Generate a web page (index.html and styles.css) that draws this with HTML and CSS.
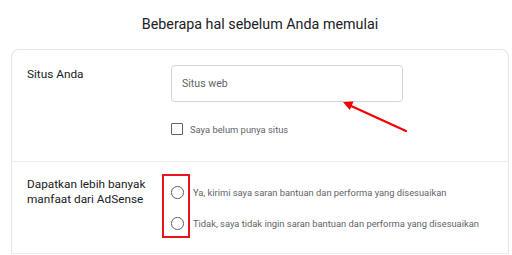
FILE: index.html
```html
<!DOCTYPE html>
<html lang="id">
<head>
<meta charset="utf-8">
<link rel="stylesheet" href="styles.css">
</head>
<body>
  <h1 class="title">Beberapa hal sebelum Anda memulai</h1>
  <div class="card">
    <div class="row row-site">
      <div class="label">Situs Anda</div>
      <div class="field">
        <div class="input">Situs web</div>
        <label class="check">
          <span class="box"></span>
          <span class="check-text">Saya belum punya situs</span>
        </label>
        <svg class="arrow" width="75" height="40" viewBox="0 0 75 40">
          <line x1="71" y1="36" x2="14" y2="10" stroke="#f40000" stroke-width="2.2" stroke-linecap="round"/>
          <polygon points="8,7 18.5,6.6 14.8,15" fill="#f40000"/>
        </svg>
      </div>
    </div>
    <div class="row row-radio">
      <div class="label">Dapatkan lebih banyak manfaat dari AdSense</div>
      <div class="options">
        <div class="option"><span class="radio"></span><span class="opt-text">Ya, kirimi saya saran bantuan dan performa yang disesuaikan</span></div>
        <div class="option"><span class="radio"></span><span class="opt-text">Tidak, saya tidak ingin saran bantuan dan performa yang disesuaikan</span></div>
        <div class="highlight"></div>
      </div>
    </div>
  </div>
</body>
</html>
```

FILE: styles.css
```css
html, body {
  margin: 0;
  padding: 0;
  background: #ffffff;
  font-family: Roboto, "Liberation Sans", sans-serif;
}

.title {
  margin: 0;
  height: 49px;
  box-sizing: border-box;
  padding-top: 14px;
  padding-left: 8px;
  font-size: 14.3px;
  line-height: 20px;
  font-weight: 400;
  color: #202124;
  text-align: center;
}

.card {
  margin-left: 11px;
  width: 496px;
  border: 1px solid #e6e6e6;
  border-bottom: 0;
  border-radius: 8px 8px 0 0;
}

.row {
  display: grid;
  grid-template-columns: 144px 1fr;
  padding-left: 15px;
  border-bottom: 1px solid #ececec;
}

.label {
  font-size: 11.8px;
  line-height: 15px;
  color: #202124;
  width: 135px;
}

.row-site {
  padding-top: 15px;
  padding-bottom: 26px;
}

.row-site .label {
  padding-top: 2px;
}

.field {
  position: relative;
}

.input {
  width: 232px;
  height: 37px;
  box-sizing: border-box;
  border: 1px solid #d4d4d4;
  border-radius: 4px;
  padding-left: 10px;
  display: flex;
  align-items: center;
  font-size: 10.6px;
  color: #5f6368;
}

.check {
  display: flex;
  align-items: center;
  margin-top: 21px;
  height: 12px;
}

.box {
  width: 12px;
  height: 12px;
  box-sizing: border-box;
  border: 1.5px solid #5f6368;
  border-radius: 1px;
  margin-right: 7px;
}

.check-text {
  font-size: 9.4px;
  color: #5f6368;
}

.arrow {
  position: absolute;
  left: 164px;
  top: 30px;
}

.row-radio {
  padding-top: 15px;
  padding-bottom: 14px;
}

.row-radio .label {
  padding-top: 0;
}

.options {
  position: relative;
}

.option {
  display: flex;
  align-items: center;
  height: 31px;
}

.radio {
  width: 12.5px;
  height: 12.5px;
  box-sizing: border-box;
  border: 1.5px solid #5f6368;
  border-radius: 50%;
  margin-right: 9.5px;
  flex-shrink: 0;
}

.opt-text {
  font-size: 9.35px;
  color: #5f6368;
  white-space: nowrap;
}

.highlight {
  position: absolute;
  left: -9px;
  top: -3px;
  width: 28px;
  height: 64px;
  box-sizing: border-box;
  border: 2px solid #e8141b;
}
```
